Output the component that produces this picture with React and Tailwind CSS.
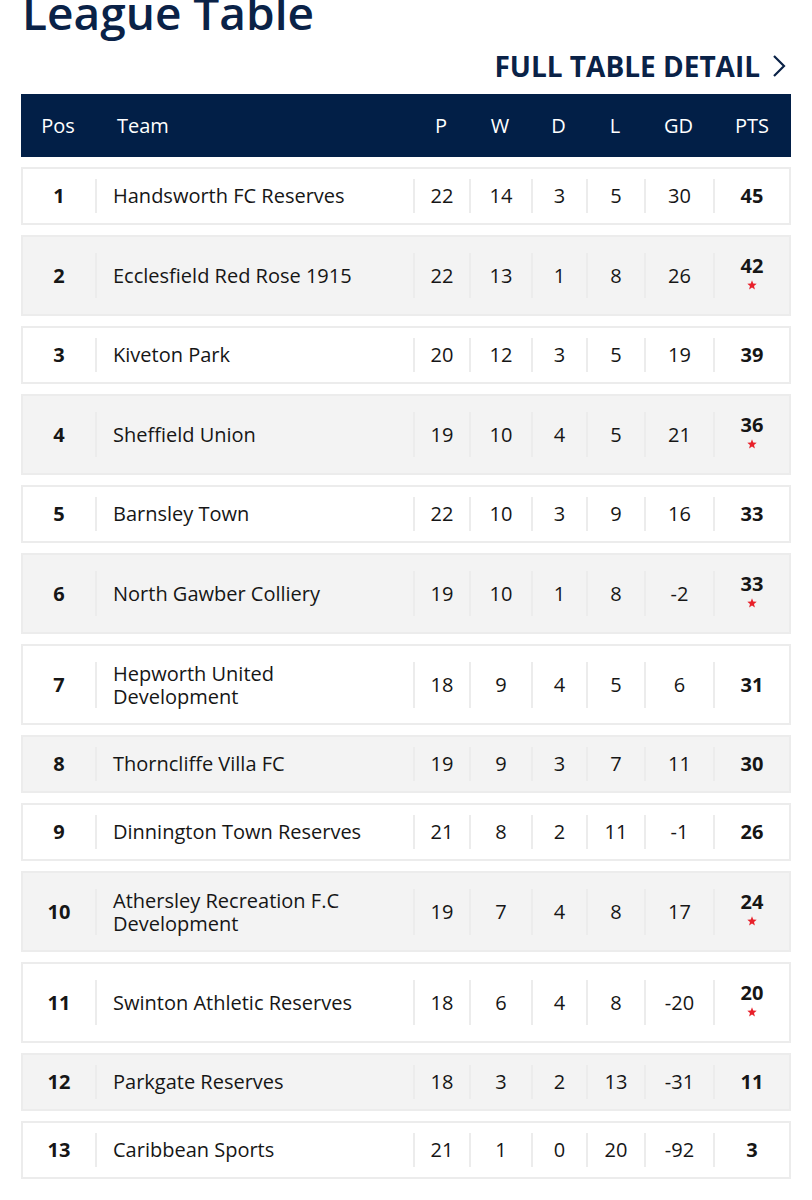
const rows = [
  { pos: 1, team: "Handsworth FC Reserves", p: 22, w: 14, d: 3, l: 5, gd: 30, pts: 45 },
  { pos: 2, team: "Ecclesfield Red Rose 1915", p: 22, w: 13, d: 1, l: 8, gd: 26, pts: 42, star: true },
  { pos: 3, team: "Kiveton Park", p: 20, w: 12, d: 3, l: 5, gd: 19, pts: 39 },
  { pos: 4, team: "Sheffield Union", p: 19, w: 10, d: 4, l: 5, gd: 21, pts: 36, star: true },
  { pos: 5, team: "Barnsley Town", p: 22, w: 10, d: 3, l: 9, gd: 16, pts: 33 },
  { pos: 6, team: "North Gawber Colliery", p: 19, w: 10, d: 1, l: 8, gd: -2, pts: 33, star: true },
  { pos: 7, team: ["Hepworth United", "Development"], p: 18, w: 9, d: 4, l: 5, gd: 6, pts: 31 },
  { pos: 8, team: "Thorncliffe Villa FC", p: 19, w: 9, d: 3, l: 7, gd: 11, pts: 30 },
  { pos: 9, team: "Dinnington Town Reserves", p: 21, w: 8, d: 2, l: 11, gd: -1, pts: 26 },
  { pos: 10, team: ["Athersley Recreation F.C", "Development"], p: 19, w: 7, d: 4, l: 8, gd: 17, pts: 24, star: true },
  { pos: 11, team: "Swinton Athletic Reserves", p: 18, w: 6, d: 4, l: 8, gd: -20, pts: 20, star: true },
  { pos: 12, team: "Parkgate Reserves", p: 18, w: 3, d: 2, l: 13, gd: -31, pts: 11 },
  { pos: 13, team: "Caribbean Sports", p: 21, w: 1, d: 0, l: 20, gd: -92, pts: 3 },
];

const font = { fontFamily: '"Open Sans", "Noto Sans", sans-serif' };

function Cell({ children, className = "" }) {
  return (
    <div className={`border-l-2 border-[#ececec] flex items-center justify-center ${className}`}>
      {children}
    </div>
  );
}

function Star() {
  return (
    <svg width="10" height="10" viewBox="0 0 10 10" className="mt-[3px]">
      <path
        d="M5 0.3 L6.2 3.6 L9.7 3.7 L7 5.9 L7.9 9.4 L5 7.4 L2.1 9.4 L3 5.9 L0.3 3.7 L3.8 3.6 Z"
        fill="#e8202a"
      />
    </svg>
  );
}

function Row({ r, i }) {
  const tall = r.star || Array.isArray(r.team);
  return (
    <div
      className={`grid grid-cols-[72px_318px_56px_62px_55px_58px_69px_1fr] border-2 border-[#ececec] text-[#161616] text-[20px] ${
        i % 2 ? "bg-[#f3f3f3]" : "bg-white"
      } ${tall ? "h-[81px] py-[16px]" : "h-[58px] py-[10px]"}`}
    >
      <div className="flex items-center justify-center font-bold">{r.pos}</div>
      <div className="border-l-2 border-[#ececec] flex items-center pl-[16px]">
        {Array.isArray(r.team) ? (
          <div className="leading-[23px]">
            {r.team[0]}
            <br />
            {r.team[1]}
          </div>
        ) : (
          r.team
        )}
      </div>
      <Cell>{r.p}</Cell>
      <Cell>{r.w}</Cell>
      <Cell>{r.d}</Cell>
      <Cell>{r.l}</Cell>
      <Cell>{r.gd}</Cell>
      {r.star ? (
        <div className="border-l-2 border-[#ececec] flex flex-col items-center justify-start pt-[2px]">
          <span className="font-bold leading-[22px]">{r.pts}</span>
          <Star />
        </div>
      ) : (
        <Cell className="font-bold">{r.pts}</Cell>
      )}
    </div>
  );
}

export default function App() {
  return (
    <div className="bg-white min-h-[1200px] px-[21px] overflow-hidden" style={font}>
      <h1 className="-mt-[11px] text-[46px] leading-none font-semibold text-[#0a2247] pl-[1px]">League Table</h1>
      <div className="mt-[17px] flex justify-end items-center pr-[5px] text-[#0a2247]">
        <span className="text-[28px] leading-[28px] font-bold">FULL TABLE DETAIL</span>
        <svg width="14" height="24" viewBox="0 0 14 24" className="ml-[12px]" fill="none" stroke="#0a2247" strokeWidth="2.2">
          <path d="M2 2 L12 12 L2 22" />
        </svg>
      </div>
      <div className="mt-[14px] h-[63px] bg-[#021f47] text-white text-[20px] grid grid-cols-[74px_318px_56px_62px_55px_58px_69px_1fr] items-center">
        <div className="text-center">Pos</div>
        <div className="pl-[22px]">Team</div>
        <div className="text-center">P</div>
        <div className="text-center">W</div>
        <div className="text-center">D</div>
        <div className="text-center">L</div>
        <div className="text-center">GD</div>
        <div className="text-center">PTS</div>
      </div>
      <div className="flex flex-col gap-[10px] pt-[10px]">
        {rows.map((r, i) => (
          <Row key={r.pos} r={r} i={i} />
        ))}
      </div>
    </div>
  );
}
